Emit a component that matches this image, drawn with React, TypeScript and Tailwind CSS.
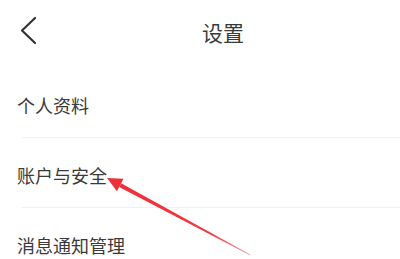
import React from "react";

export default function App() {
  const font = { fontFamily: '"Noto Sans CJK SC", "Noto Sans", sans-serif' };
  return (
    <div className="relative w-[400px] h-[259px] overflow-hidden bg-white" style={font}>
      <div className="relative h-[68px] flex items-center justify-center">
        <svg className="absolute left-[18px] top-[14px]" width="22" height="34" viewBox="0 0 22 34">
          <polyline points="17,4 4,16.5 17,29" fill="none" stroke="#333" strokeWidth="2.2" strokeLinecap="round" strokeLinejoin="round" />
        </svg>
        <span className="text-[21px] leading-[28px] text-[#3a3a3a] ml-[46px] -mt-[4px]">设置</span>
      </div>
      <div className="flex flex-col">
        <div className="h-[69px] pt-[25px] pl-[17px] text-[18px] leading-[24px] text-[#3a3a3a]">个人资料</div>
        <div className="h-px ml-[22px] bg-[#f1f1f1]" />
        <div className="h-[69px] pt-[25px] pl-[17px] text-[18px] leading-[24px] text-[#3a3a3a]">账户与安全</div>
        <div className="h-px ml-[22px] bg-[#f1f1f1]" />
        <div className="h-[69px] pt-[25px] pl-[17px] text-[18px] leading-[24px] text-[#3a3a3a]">消息通知管理</div>
      </div>
      <svg className="absolute left-0 top-0 pointer-events-none" width="400" height="259" viewBox="0 0 400 259">
        <defs>
          <linearGradient id="g" x1="120" y1="185" x2="250" y2="255" gradientUnits="userSpaceOnUse">
            <stop offset="0" stopColor="#ee3138" />
            <stop offset="0.7" stopColor="#ee3a40" />
            <stop offset="1" stopColor="#f3a0a4" />
          </linearGradient>
        </defs>
        <polygon points="107,178 123.5,178.8 116.9,191.2" fill="#ee3138" />
        <polygon points="119.1,186.9 121.1,183.3 250.3,254.6 249.9,255.3" fill="url(#g)" />
      </svg>
    </div>
  );
}
